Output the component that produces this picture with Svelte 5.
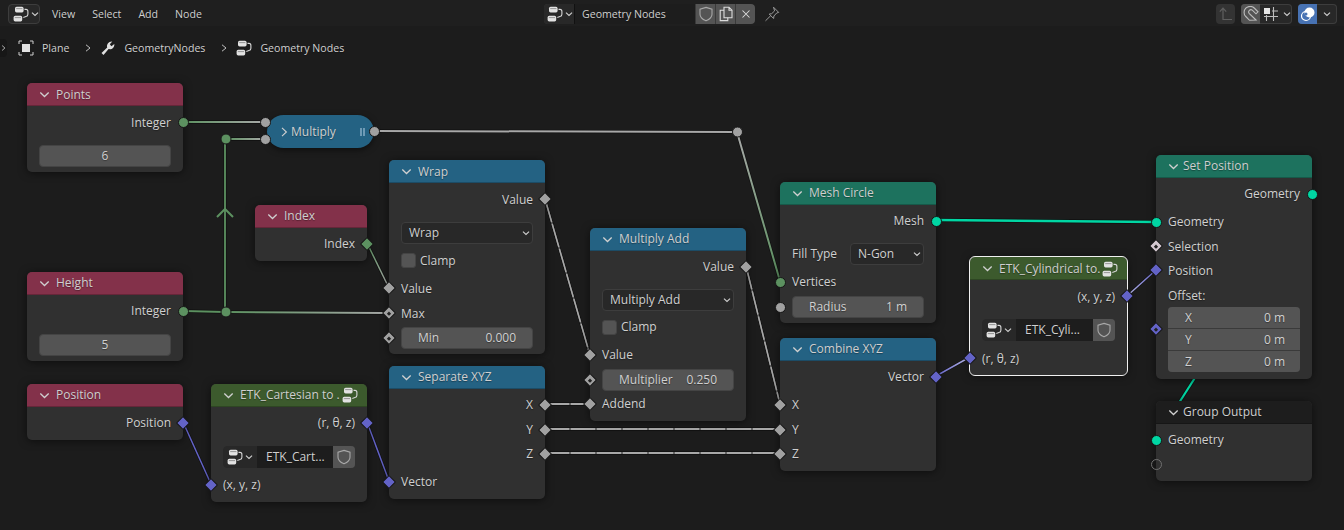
<script>
	const grey = '#a1a1a1';
	const green = '#5c9160';
	const teal = '#00d6a3';
	const violet = '#6363c7';
	const wireGrey = '#a8a8a8';

	const wires = [
		{ x1: 1312, y1: 194, x2: 1156, y2: 439, c1: teal, c2: teal, w: 2.2 },
		{ x1: 183, y1: 122, x2: 265, y2: 122, c1: green, c2: wireGrey, w: 2 },
		{ x1: 226, y1: 139, x2: 265, y2: 139, c1: green, c2: wireGrey, w: 2 },
		{ x1: 225, y1: 311, x2: 225, y2: 139, c1: green, c2: green, w: 1.8 },
		{ x1: 183, y1: 311, x2: 226, y2: 312, c1: green, c2: green, w: 2 },
		{ x1: 226, y1: 312, x2: 390, y2: 313, c1: green, c2: wireGrey, w: 2 },
		{ x1: 374, y1: 131, x2: 737, y2: 132, c1: wireGrey, c2: wireGrey, w: 2 },
		{ x1: 737, y1: 132, x2: 780, y2: 281, c1: wireGrey, c2: green, w: 2 },
		{ x1: 367, y1: 243, x2: 389, y2: 288, c1: green, c2: wireGrey, w: 1.5 },
		{ x1: 545, y1: 199, x2: 590, y2: 355, c1: wireGrey, c2: wireGrey, w: 1.5, dash: '24 2' },
		{ x1: 746, y1: 266, x2: 780, y2: 404, c1: wireGrey, c2: wireGrey, w: 1.5, dash: '24 2' },
		{ x1: 545, y1: 404, x2: 590, y2: 404, c1: wireGrey, c2: wireGrey, w: 2, dash: '24 2' },
		{ x1: 545, y1: 429, x2: 780, y2: 429, c1: wireGrey, c2: wireGrey, w: 2, dash: '24 2' },
		{ x1: 545, y1: 453, x2: 780, y2: 453, c1: wireGrey, c2: wireGrey, w: 2, dash: '24 2' },
		{ x1: 183, y1: 422, x2: 211, y2: 484, c1: violet, c2: violet, w: 1.5 },
		{ x1: 367, y1: 422, x2: 389, y2: 481, c1: violet, c2: violet, w: 1.5 },
		{ x1: 936, y1: 376, x2: 970, y2: 357, c1: violet, c2: '#b9b9e6', w: 1.5 },
		{ x1: 1127, y1: 296, x2: 1156, y2: 270, c1: '#b9b9e6', c2: violet, w: 1.5 },
		{ x1: 936, y1: 220, x2: 1156, y2: 222, c1: teal, c2: teal, w: 2.6 }
	];

	const nodes = [
		{
			title: 'Points', kind: 'input low', x: 27, y: 83,
			rows: [
				{ t: 'out', label: 'Integer', s: 'green' },
				{ t: 'field', center: '6', mt: 11 }
			]
		},
		{
			title: 'Wrap', kind: 'math low', x: 389, y: 160,
			rows: [
				{ t: 'out', label: 'Value', s: 'diamond' },
				{ t: 'select', label: 'Wrap', mt: 11 },
				{ t: 'check', label: 'Clamp', mt: 4 },
				{ t: 'in', label: 'Value', s: 'diamond', mt: 4 },
				{ t: 'in', label: 'Max', s: 'hollow', mt: 1 },
				{ t: 'field', label: 'Min', value: '0.000', s: 'hollow', mt: 2 }
			]
		},
		{
			title: 'Index', kind: 'input', x: 255, y: 205, w: 112,
			rows: [{ t: 'out', label: 'Index', s: 'greend' }]
		},
		{
			title: 'Height', kind: 'input', x: 27, y: 272,
			rows: [
				{ t: 'out', label: 'Integer', s: 'green' },
				{ t: 'field', center: '5', mt: 11 }
			]
		},
		{
			title: 'Position', kind: 'input', x: 27, y: 384,
			rows: [{ t: 'out', label: 'Position', s: 'violet' }]
		},
		{
			title: 'ETK_Cartesian to .', kind: 'group', x: 211, y: 384, icon: true,
			rows: [
				{ t: 'out', label: '(r, θ, z)', s: 'violet' },
				{ t: 'picker', label: 'ETK_Cart...', mt: 11 },
				{ t: 'in', label: '(x, y, z)', s: 'violet', mt: 5 }
			]
		},
		{
			title: 'Separate XYZ', kind: 'math', x: 389, y: 366,
			rows: [
				{ t: 'out', label: 'X', s: 'diamond' },
				{ t: 'out', label: 'Y', s: 'diamond', mt: 1 },
				{ t: 'out', label: 'Z', s: 'diamond' },
				{ t: 'in', label: 'Vector', s: 'violet', mt: 4 }
			]
		},
		{
			title: 'Multiply Add', kind: 'math', x: 590, y: 228,
			rows: [
				{ t: 'out', label: 'Value', s: 'diamond' },
				{ t: 'select', label: 'Multiply Add', mt: 10 },
				{ t: 'check', label: 'Clamp', mt: 4 },
				{ t: 'in', label: 'Value', s: 'diamond', mt: 4 },
				{ t: 'field', label: 'Multiplier', value: '0.250', s: 'hollow', mt: 2 },
				{ t: 'in', label: 'Addend', s: 'diamond', mt: 1 }
			]
		},
		{
			title: 'Mesh Circle', kind: 'geo', x: 780, y: 182,
			rows: [
				{ t: 'out', label: 'Mesh', s: 'teal' },
				{ t: 'fill', label: 'Fill Type', value: 'N-Gon', mt: 9 },
				{ t: 'in', label: 'Vertices', s: 'green', mt: 4 },
				{ t: 'field', label: 'Radius', value: '1 m', s: 'round', mt: 2 }
			]
		},
		{
			title: 'Combine XYZ', kind: 'math', x: 780, y: 338,
			rows: [
				{ t: 'out', label: 'Vector', s: 'violet' },
				{ t: 'in', label: 'X', s: 'diamond', mt: 4 },
				{ t: 'in', label: 'Y', s: 'diamond', mt: 1 },
				{ t: 'in', label: 'Z', s: 'diamond' }
			]
		},
		{
			title: 'ETK_Cylindrical to.', kind: 'group low', x: 970, y: 257, w: 157, icon: true, active: true,
			rows: [
				{ t: 'out', label: '(x, y, z)', s: 'violet' },
				{ t: 'picker', label: 'ETK_Cyli...', mt: 11 },
				{ t: 'in', label: '(r, θ, z)', s: 'violet', mt: 5 }
			]
		},
		{
			title: 'Set Position', kind: 'geo tight', x: 1156, y: 155,
			rows: [
				{ t: 'out', label: 'Geometry', s: 'teal' },
				{ t: 'in', label: 'Geometry', s: 'teal', mt: 4 },
				{ t: 'in low', label: 'Selection', s: 'hollowpale' },
				{ t: 'in low', label: 'Position', s: 'violet' },
				{ t: 'vector', label: 'Offset:', s: 'hollowviolet' }
			]
		},
		{
			title: 'Group Output', kind: 'output tight', x: 1156, y: 401,
			rows: [
				{ t: 'in', label: 'Geometry', s: 'teal' },
				{ t: 'in', label: '', s: 'empty' }
			]
		}
	];

	const axes = [
		{ name: 'X', value: '0 m' },
		{ name: 'Y', value: '0 m' },
		{ name: 'Z', value: '0 m' }
	];
</script>

{#snippet chev(cls = 'chev')}
	<svg class={cls} viewBox="0 0 10 10"><path d="M1.2 3.2 5 6.8l3.8-3.6" /></svg>
{/snippet}

{#snippet treeIcon()}
	<svg class="icon" viewBox="0 0 16 16">
		<rect x="2" y="0.8" width="8.6" height="5.6" rx="1.6" fill="#e2e2e2" />
		<rect x="3.2" y="2.2" width="6.2" height="0.9" fill="#8a8a8a" />
		<rect x="0.6" y="9.8" width="8.6" height="5.6" rx="1.6" fill="#e2e2e2" />
		<rect x="1.8" y="11.2" width="6.2" height="0.9" fill="#8a8a8a" />
		<path d="M11.5 3.4h1.4q2 0 2 2v2.8q0 2-2 2.3l-2.6.9" fill="none" stroke="#d8d8d8" stroke-width="1.1" />
	</svg>
{/snippet}

{#snippet shield()}
	<svg class="icon" viewBox="0 0 16 16">
		<path d="M8 1.4 14 3.2v5q0 4-6 6.6-6-2.6-6-6.6v-5z" fill="none" stroke="#a8a8a8" stroke-width="1.1" />
	</svg>
{/snippet}

<div class="page">
	<header class="topbar">
		<div class="editor-btn">
			{@render treeIcon()}
			{@render chev()}
		</div>
		<nav class="menu">
			<span>View</span>
			<span>Select</span>
			<span>Add</span>
			<span>Node</span>
		</nav>
		<div class="center">
			<div class="datablock">
				<div class="db-type">
					{@render treeIcon()}
					{@render chev()}
				</div>
				<div class="db-name">Geometry Nodes</div>
				<div class="db-btn">{@render shield()}</div>
				<div class="db-btn">
					<svg class="icon" viewBox="0 0 16 16">
						<path d="M6 1.2h5l3 3v7.6H6z M11 1.2v3h3" fill="none" stroke="#dcdcdc" stroke-width="1.1" />
						<path d="M6 4.2H2.2v10.4h7.6v-2.8" fill="none" stroke="#dcdcdc" stroke-width="1.1" />
					</svg>
				</div>
				<div class="db-btn last">
					<svg class="icon x" viewBox="0 0 16 16">
						<path d="m4 4 8 8M12 4l-8 8" fill="none" stroke="#dcdcdc" stroke-width="1.2" />
					</svg>
				</div>
			</div>
			<svg class="icon pin" viewBox="0 0 16 16">
				<path d="m9.5 1.2 5.2 5.2-2 .6-2.8 3-.3 2.5L5.2 8.1l2.5-.4 2.9-2.8zM6.8 9.6 1.5 14.8" fill="none" stroke="#9a9a9a" stroke-width="1" />
			</svg>
		</div>
		<div class="right">
			<div class="parent">
				<svg class="icon" viewBox="0 0 16 16">
					<path d="M5 14V2.5M1.8 5.6 5 2.2l3.2 3.4M5 13.5h9" fill="none" stroke="#5f5f5f" stroke-width="1.2" />
				</svg>
			</div>
			<div class="snap">
				<div class="snap-mag">
					<svg class="icon" viewBox="0 0 16 16">
						<path d="M13 14 6.1 7.3a2.3 2.3 0 0 1 3.2-3.2L13 7.8l2-2-3.8-3.8C9-.2 5.1-.1 2.8 2.2S.5 8.3 2.8 10.5L6.5 14.3z" fill="none" stroke="#bdbdbd" stroke-width="1.1" />
					</svg>
				</div>
				<div class="snap-grid">
					<svg class="icon" viewBox="0 0 16 16">
						<rect x="1" y="2" width="6" height="6" fill="#e6e6e6" />
						<path d="M10.5 1v14M1 10.5h14M3.5 9v6M9 5h6" fill="none" stroke="#bdbdbd" stroke-width="1.1" />
					</svg>
					{@render chev()}
				</div>
			</div>
			<div class="overlay">
				<div class="ov-on">
					<svg class="icon" viewBox="0 0 16 16">
						<circle cx="6" cy="10" r="4.5" fill="none" stroke="#fff" stroke-width="1.2" />
						<circle cx="9.5" cy="6.5" r="5" fill="#fff" />
						<circle cx="6" cy="8" r="1.5" fill="#4772b3" />
					</svg>
				</div>
				<div class="ov-drop">{@render chev()}</div>
			</div>
		</div>
	</header>

	<main class="canvas">
		<div class="crumbs">
			<span class="tab"><svg class="crumb-tab" viewBox="0 0 10 10"><path d="M3 1.5 7 5 3 8.5" /></svg></span>
			<svg class="icon plane" viewBox="0 0 16 16">
				<rect x="4" y="4" width="8" height="8" fill="#e2e2e2" />
				<path d="M1 4V1h3M12 1h3v3M15 12v3h-3M4 15H1v-3" fill="none" stroke="#cfcfcf" stroke-width="1" />
			</svg>
			<span class="crumb-text">Plane</span>
			<svg class="crumb-sep" viewBox="0 0 10 10"><path d="M2.5 1 7.5 5 2.5 9" /></svg>
			<svg class="icon" viewBox="0 0 16 16">
				<path d="M1.500 13 7.200 7.600C6.300 4.600 8.400 1.300 12.300 1.500L9.800 4.300l1.600 1.900 2.900-2.300c.5 3.500-2.600 6-5.700 5.200L3.500 15z" fill="#e0e0e0" />
			</svg>
			<span class="crumb-text">GeometryNodes</span>
			<svg class="crumb-sep" viewBox="0 0 10 10"><path d="M2.5 1 7.5 5 2.5 9" /></svg>
			{@render treeIcon()}
			<span class="crumb-text">Geometry Nodes</span>
		</div>

		<svg class="wires" viewBox="0 26 1344 504">
			<defs>
				{#each wires as wire, i}
					<linearGradient id={'wire' + i} gradientUnits="userSpaceOnUse" x1={wire.x1} y1={wire.y1} x2={wire.x2} y2={wire.y2 + 0.01}>
						<stop offset="0" stop-color={wire.c1} />
						<stop offset="1" stop-color={wire.c2} />
					</linearGradient>
				{/each}
			</defs>
			{#each wires as wire, i}
				<line x1={wire.x1} y1={wire.y1} x2={wire.x2} y2={wire.y2} stroke="#000" stroke-opacity="0.45" stroke-width={wire.w + 1.4} />
				{#if wire.dash}
					<line x1={wire.x1} y1={wire.y1} x2={wire.x2} y2={wire.y2} stroke="#666" stroke-width={wire.w} />
				{/if}
				<line x1={wire.x1} y1={wire.y1} x2={wire.x2} y2={wire.y2 + 0.01} stroke={'url(#wire' + i + ')'} stroke-width={wire.w} stroke-dasharray={wire.dash} />
			{/each}
			<path d="M217 217 225 209 233 217" fill="none" stroke={green} stroke-width="2" />
			<circle cx="226" cy="139" r="5" fill={green} stroke="#1a1a1a" />
			<circle cx="226" cy="312" r="5" fill={green} stroke="#1a1a1a" />
			<circle cx="737.5" cy="132" r="5" fill={grey} stroke="#1a1a1a" />
		</svg>

		<div class="pill" style="left: 267px; top: 89px;">
			<svg class="chev side" viewBox="0 0 10 10"><path d="M3 .8 7.400 5 3 9.200" /></svg>
			<span>Multiply</span>
			<i class="pause"></i>
			<b class="socket round in-a"></b>
			<b class="socket round in-b"></b>
			<b class="socket round out-a"></b>
		</div>

		{#each nodes as node}
			<section class={['node', node.kind, node.active && 'active']} style={`left: ${node.x}px; top: ${node.y - 26}px; width: ${node.w ?? 156}px;`}>
				<div class="head">
					{@render chev('chev title-chev')}
					<span class="title">{node.title}</span>
					{#if node.icon}{@render treeIcon()}{/if}
				</div>
				<div class="body">
					{#each node.rows as row}
						{@const type = row.t.split(' ')[0]}
						<div class={['row', row.t]} style={row.mt ? `margin-top: ${row.mt}px` : ''}>
							{#if row.s}<b class={['socket', row.s]}></b>{/if}
							{#if type === 'out' || type === 'in'}
								<span>{row.label}</span>
							{:else if type === 'field'}
								<div class="num">
									{#if row.center}
										<span class="num-center">{row.center}</span>
									{:else}
										<span class="num-label">{row.label}</span>
										<span>{row.value}</span>
									{/if}
								</div>
							{:else if type === 'select'}
								<div class="drop">
									<span>{row.label}</span>
									{@render chev()}
								</div>
							{:else if type === 'fill'}
								<span class="fill-label">{row.label}</span>
								<div class="drop">
									<span>{row.value}</span>
									{@render chev()}
								</div>
							{:else if type === 'check'}
								<i class="box"></i>
								<span>{row.label}</span>
							{:else if type === 'picker'}
								<div class="pick-box">
									<div class="pick-type">
										{@render treeIcon()}
										{@render chev()}
									</div>
									<div class="pick-name">{row.label}</div>
									<div class="pick-shield">{@render shield()}</div>
								</div>
							{:else if type === 'vector'}
								<div class="vec">
									<span class="vec-title">{row.label}</span>
									<div class="vec-stack">
										{#each axes as axis}
											<div class="vec-row">
												<span class="vec-name">{axis.name}</span>
												<span>{axis.value}</span>
											</div>
										{/each}
									</div>
								</div>
							{/if}
						</div>
					{/each}
				</div>
			</section>
		{/each}
	</main>
</div>

<style>
	:global(body) {
		margin: 0;
		background: #1d1d1d;
	}

	.page {
		width: 1344px;
		height: 530px;
		display: flex;
		flex-direction: column;
		overflow: hidden;
		font: 12px/1.3 'Open Sans', sans-serif;
		color: #d0d0d0;
		text-shadow: 0 1px 1px rgba(0, 0, 0, 0.35);
		background: #1d1d1d;
	}

	.icon {
		width: 16px;
		height: 16px;
		flex: none;
		display: block;
	}

	.chev {
		width: 8px;
		height: 8px;
		flex: none;
		fill: none;
		stroke: #d0d0d0;
		stroke-width: 1.4;
	}

	/* header */
	.topbar {
		height: 26px;
		flex: none;
		display: flex;
		align-items: center;
		padding-left: 8px;
		background: #1f1f1f;
		position: relative;
		font-size: 10.6px;
	}

	.editor-btn {
		width: 32px;
		height: 20px;
		box-sizing: border-box;
		display: flex;
		align-items: center;
		gap: 2px;
		padding-left: 4px;
		background: #282828;
		border: 1px solid #3d3d3d;
		border-radius: 4px;
		margin-top: 2px;
	}

	.menu {
		display: flex;
		gap: 17px;
		margin-left: 12px;
		margin-top: 3px;
	}

	.center {
		position: absolute;
		left: 544px;
		top: 4px;
		display: flex;
		align-items: center;
		gap: 9px;
	}

	.datablock {
		display: flex;
		height: 20px;
		width: 211px;
		border-radius: 4px;
		overflow: hidden;
		box-shadow: inset 0 0 0 1px #3d3d3d;
	}

	.db-type {
		width: 30px;
		display: flex;
		align-items: center;
		gap: 2px;
		padding-left: 3px;
		box-sizing: border-box;
		background: #282828;
	}

	.db-name {
		width: 121px;
		display: flex;
		align-items: center;
		padding: 1px 0 0 7px;
		box-sizing: border-box;
		background: #1d1d1d;
		border-left: 1px solid #111;
	}

	.db-btn {
		width: 20px;
		display: flex;
		align-items: center;
		justify-content: center;
		background: #545454;
		border-left: 1px solid #3a3a3a;
		box-sizing: border-box;
	}

	.db-btn.last {
		border-radius: 0 4px 4px 0;
	}

	.x {
		width: 14px;
		height: 14px;
	}

	.right {
		position: absolute;
		left: 1216px;
		top: 4px;
		display: flex;
		gap: 6px;
		height: 20px;
	}

	.parent {
		width: 19px;
		display: flex;
		align-items: center;
		justify-content: center;
		background: #333;
		border-radius: 4px;
	}

	.snap,
	.overlay {
		display: flex;
		border-radius: 4px;
		overflow: hidden;
		background: #282828;
		box-shadow: inset 0 0 0 1px #3d3d3d;
	}

	.snap-mag {
		width: 19px;
		background: #545454;
		display: flex;
		align-items: center;
		justify-content: center;
	}

	.snap-grid {
		width: 32px;
		display: flex;
		align-items: center;
		gap: 4px;
		padding-left: 3px;
		box-sizing: border-box;
	}

	.ov-on {
		width: 19px;
		background: #4772b3;
		display: flex;
		align-items: center;
		justify-content: center;
	}

	.ov-drop {
		width: 20px;
		display: flex;
		align-items: center;
		justify-content: center;
	}

	/* canvas */
	.canvas {
		flex: 1;
		position: relative;
		background: #1c1c1c;
	}

	.crumbs {
		position: absolute;
		left: 0;
		top: 14px;
		height: 16px;
		display: flex;
		align-items: center;
		font-size: 10.6px;
		z-index: 2;
	}

	.tab {
		width: 7px;
		height: 18px;
		display: flex;
		align-items: center;
		background: #171717;
		border-radius: 0 4px 4px 0;
	}

	.crumb-tab {
		width: 7px;
		height: 10px;
		fill: none;
		stroke: #c8c8c8;
		stroke-width: 1.2;
		flex: none;
	}

	.crumb-sep {
		width: 8px;
		height: 12px;
		margin: 0 8px 0 15px;
		flex: none;
		fill: none;
		stroke: #c8c8c8;
		stroke-width: 1.2;
	}

	.plane {
		margin-left: 11px;
	}

	.crumb-text {
		margin-left: 8px;
		padding-top: 2px;
	}

	.wires {
		position: absolute;
		left: 0;
		top: 0;
		width: 1344px;
		height: 504px;
	}

	.pill {
		position: absolute;
		width: 107px;
		height: 33px;
		box-sizing: border-box;
		padding: 1px 0 0 12px;
		display: flex;
		align-items: center;
		gap: 2px;
		background: #246283;
		border-radius: 17px;
		box-shadow: 0 2px 6px rgba(0, 0, 0, 0.5);
		z-index: 1;
	}

	.side {
		stroke-width: 1.1;
		height: 12px;
		width: 10px;
	}

	.pause {
		position: absolute;
		left: 93px;
		top: 13px;
		width: 5px;
		height: 8px;
		border-left: 2px solid #6e9ab5;
		border-right: 2px solid #6e9ab5;
		box-sizing: border-box;
	}

	.node {
		position: absolute;
		background: #303030;
		border-radius: 5px;
		box-shadow: 0 1px 8px rgba(0, 0, 0, 0.55);
		z-index: 1;
	}

	.node.active {
		outline: 1px solid #f0f0f0;
	}

	.head {
		height: 23px;
		display: flex;
		align-items: center;
		padding-left: 12px;
		border-radius: 5px 5px 0 0;
		border-bottom: 1px solid rgba(0, 0, 0, 0.22);
		box-sizing: border-box;
		color: #cfcfcf;
	}

	.low .head {
		padding-top: 1px;
	}

	.input .head {
		background: #83314a;
	}

	.math .head {
		background: #246283;
	}

	.geo .head {
		background: #1d725e;
	}

	.group .head {
		background: #3c5a2d;
	}

	.output .head {
		background: #1d1d1d;
	}

	.title-chev {
		width: 11px;
		height: 11px;
		margin-right: 6px;
		stroke-width: 1.2;
	}

	.tight .title-chev {
		margin-right: 4px;
	}

	.title {
		flex: 1;
		white-space: nowrap;
		min-width: 0;
	}

	.head .icon {
		margin-right: 9px;
	}

	.body {
		display: flex;
		flex-direction: column;
		padding: 4px 0 5px;
	}

	.row {
		position: relative;
		box-sizing: border-box;
		height: 24px;
		padding: 0 12px;
		display: flex;
		align-items: center;
		flex: none;
	}

	.row.low,
	.low .row.in,
	.low .row.out,
	.low .row.check {
		padding-top: 1px;
	}

	.row.out {
		justify-content: flex-end;
	}

	.row.select,
	.row.field,
	.row.picker {
		height: 22px;
	}

	.row.check {
		gap: 4px;
	}

	.row.vector {
		height: 92px;
		align-items: flex-start;
	}

	.socket {
		position: absolute;
		left: 0;
		top: 50%;
		width: 11px;
		height: 11px;
		margin: -5.5px 0 0 -5.5px;
		box-sizing: border-box;
		border: 1px solid #161616;
		background: #a1a1a1;
		z-index: 3;
	}

	.vector > .socket {
		top: 51%;
	}

	.out > .socket {
		left: 100%;
	}

	.socket.round,
	.socket.green,
	.socket.teal,
	.socket.empty {
		border-radius: 50%;
	}

	.socket.green {
		background: #5c9160;
	}

	.socket.teal {
		background: #00d6a3;
	}

	.socket.empty {
		background: transparent;
		border: 1.5px solid #707070;
	}

	.socket.diamond,
	.socket.greend,
	.socket.violet,
	.socket.hollow,
	.socket.hollowpale,
	.socket.hollowviolet {
		width: 10px;
		height: 10px;
		margin: -5px 0 0 -5px;
		transform: rotate(45deg);
		border-radius: 1px;
	}

	.socket.greend {
		background: #5c9160;
	}

	.socket.violet,
	.socket.hollowviolet {
		background: #6363c7;
	}

	.socket.hollowpale {
		background: #d4c8d0;
	}

	.socket.hollow::after,
	.socket.hollowpale::after,
	.socket.hollowviolet::after {
		content: '';
		position: absolute;
		left: 2.5px;
		top: 2.5px;
		width: 3px;
		height: 3px;
		background: #222;
	}

	.in-a,
	.in-b {
		left: -2px;
	}

	.in-a {
		top: 7px;
	}

	.in-b {
		top: 24px;
	}

	.out-a {
		left: 107px;
		top: 16px;
	}

	.num {
		flex: 1;
		height: 22px;
		box-sizing: border-box;
		display: flex;
		align-items: center;
		justify-content: space-between;
		padding: 0 16px;
		background: #545454;
		border: 1px solid #444;
		border-radius: 4px;
	}

	.num-center {
		flex: 1;
		text-align: center;
	}

	.drop {
		flex: 1;
		height: 22px;
		box-sizing: border-box;
		display: flex;
		align-items: center;
		justify-content: space-between;
		padding: 0 2px 0 7px;
		background: #282828;
		border: 1px solid #3d3d3d;
		border-radius: 4px;
	}

	.fill-label {
		width: 58px;
		flex: none;
	}

	.box {
		width: 15px;
		height: 15px;
		background: #545454;
		border-radius: 3px;
		border: 1px solid #444;
		box-sizing: border-box;
	}

	.pick-box {
		flex: 1;
		height: 22px;
		display: flex;
		border-radius: 4px;
		overflow: hidden;
		box-shadow: inset 0 0 0 1px #3d3d3d;
	}

	.pick-type {
		width: 34px;
		flex: none;
		display: flex;
		align-items: center;
		justify-content: center;
		gap: 2px;
		background: #282828;
	}

	.pick-name {
		flex: 1;
		display: flex;
		align-items: center;
		padding-left: 9px;
		background: #1d1d1d;
		white-space: nowrap;
	}

	.pick-shield {
		width: 22px;
		flex: none;
		display: flex;
		align-items: center;
		justify-content: center;
		background: #545454;
	}

	.vec {
		flex: 1;
		display: flex;
		flex-direction: column;
	}

	.vec-title {
		height: 25px;
		line-height: 27px;
	}

	.vec-stack {
		display: flex;
		flex-direction: column;
		border-radius: 4px;
		overflow: hidden;
		gap: 1px;
		background: #3a3a3a;
	}

	.vec-row {
		height: 21px;
		display: flex;
		align-items: center;
		justify-content: space-between;
		padding: 0 15px 0 17px;
		background: #545454;
	}

	.vec-name {
		width: 10px;
	}
</style>
